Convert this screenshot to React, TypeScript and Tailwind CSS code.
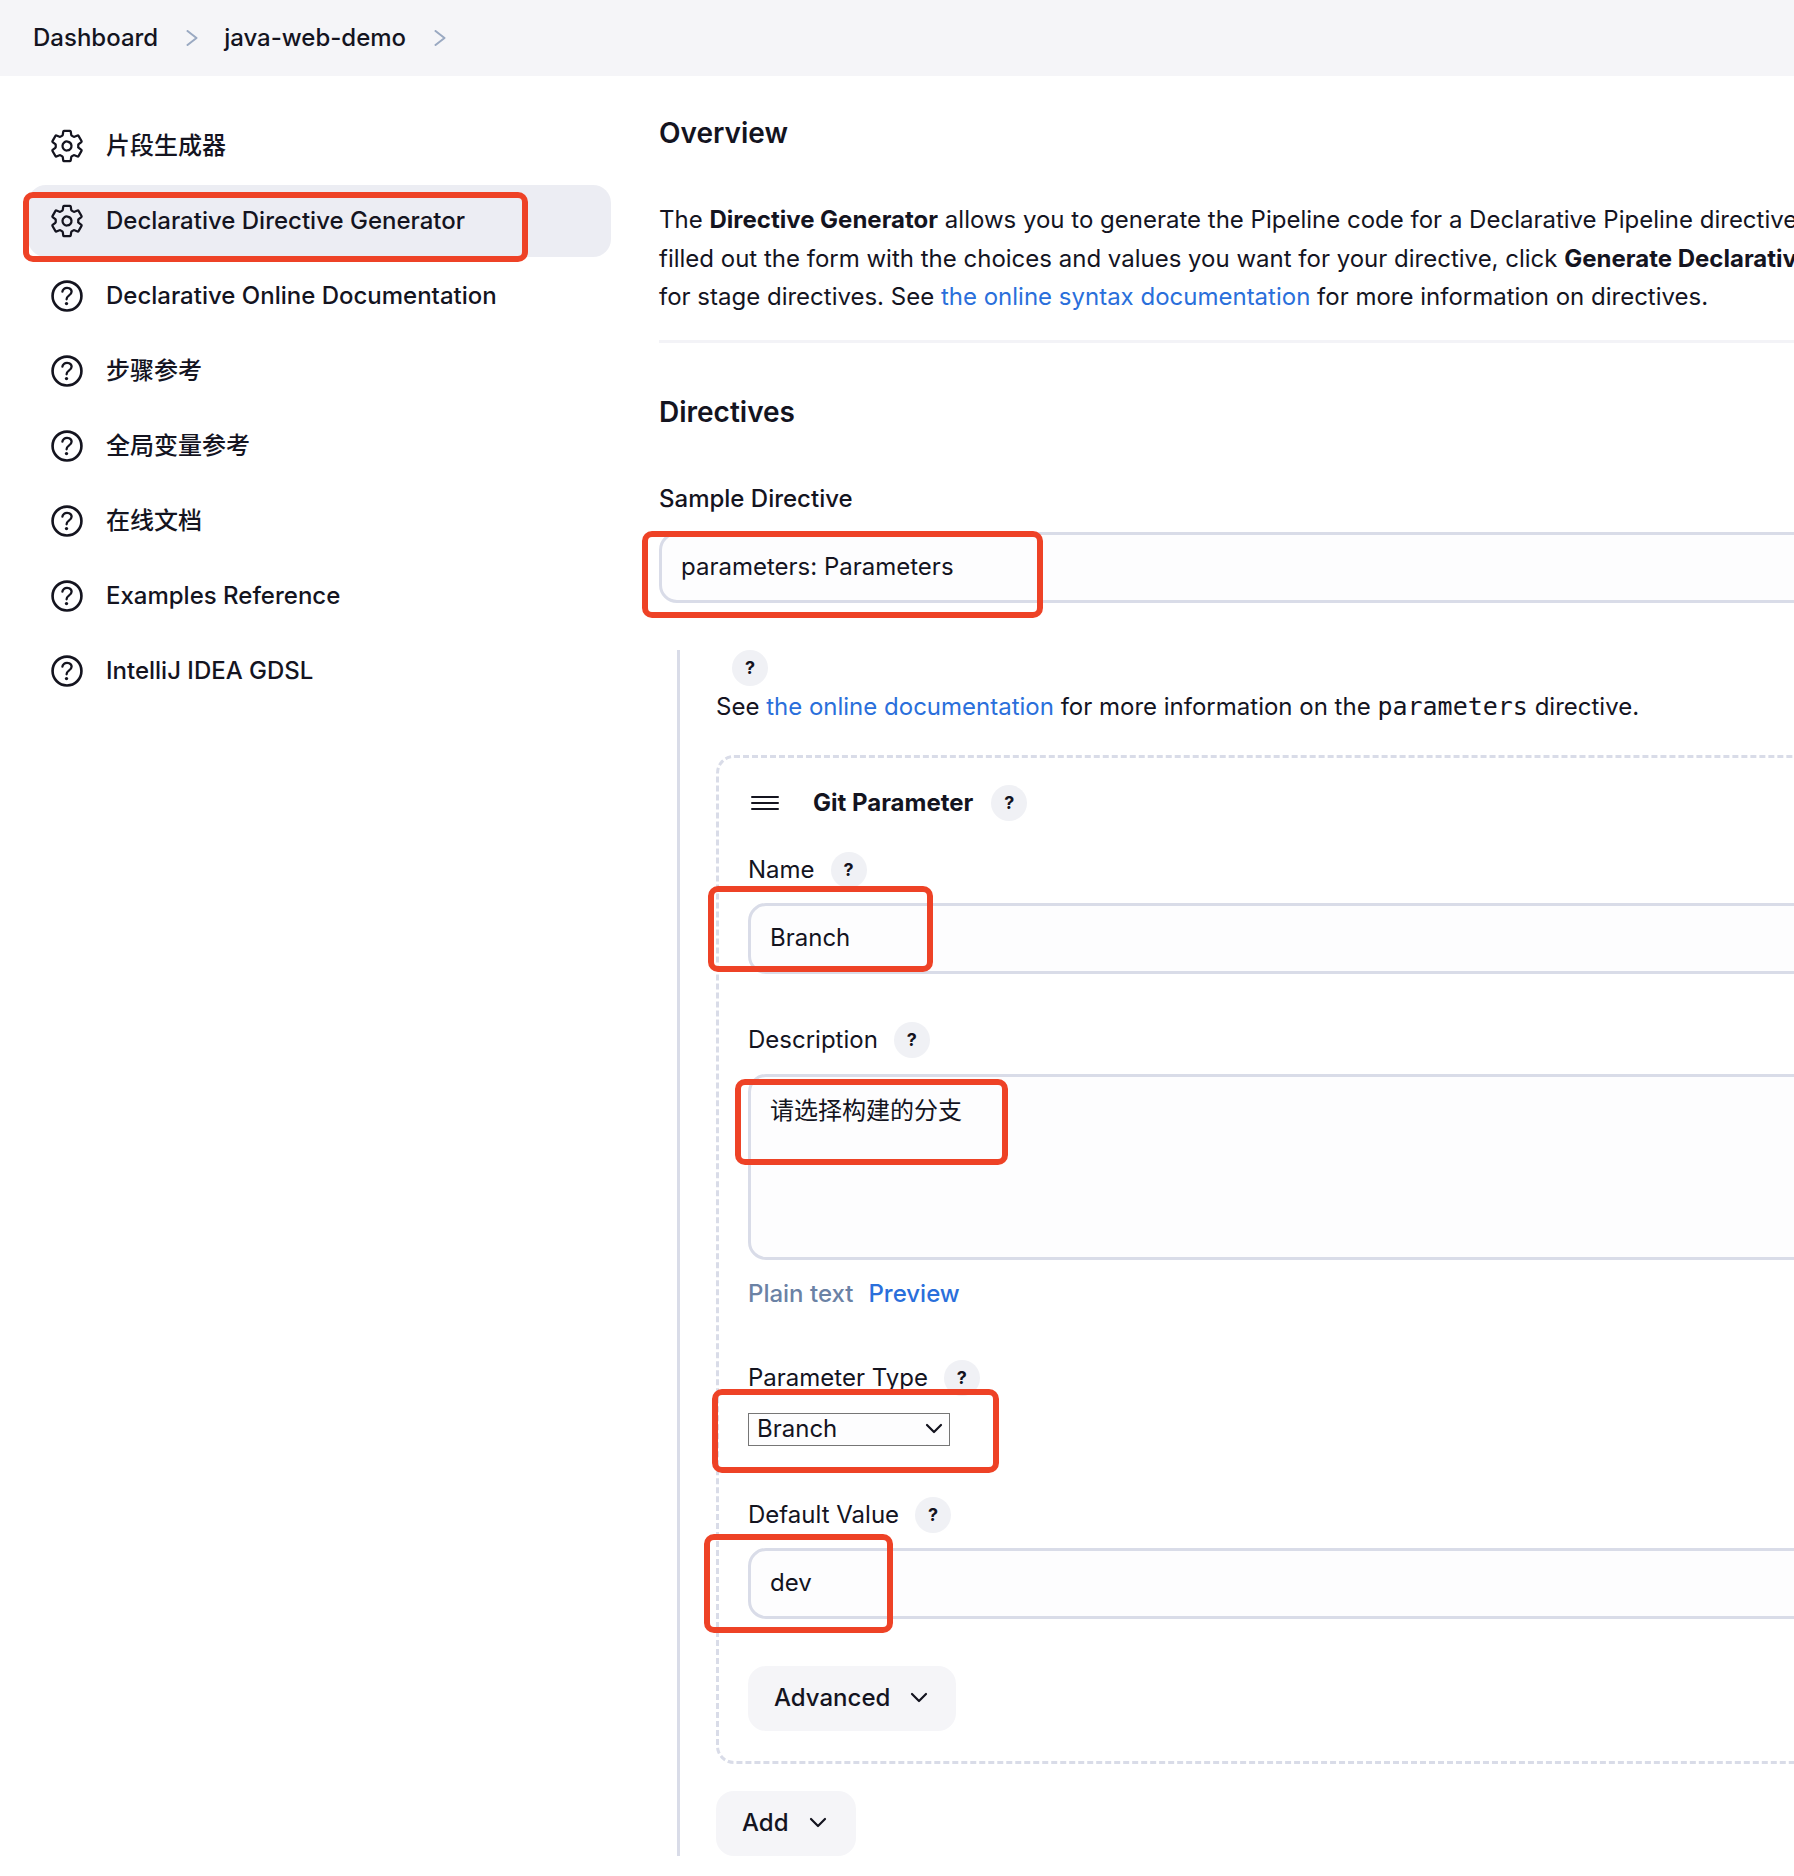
import React from 'react';
import {IoHelpCircleOutline, IoSettingsOutline} from 'react-icons/io5';

const navItems = [
  {label: '片段生成器', icon: 'gear'},
  {label: 'Declarative Directive Generator', icon: 'gear', active: true},
  {label: 'Declarative Online Documentation', icon: 'help'},
  {label: '步骤参考', icon: 'help'},
  {label: '全局变量参考', icon: 'help'},
  {label: '在线文档', icon: 'help'},
  {label: 'Examples Reference', icon: 'help'},
  {label: 'IntelliJ IDEA GDSL', icon: 'help'},
];

const redBoxes = [
  'left-[23px] top-[192px] w-[505px] h-[70px]',
  'left-[642px] top-[531px] w-[401px] h-[87px]',
  'left-[708px] top-[886px] w-[225px] h-[86px]',
  'left-[735px] top-[1079px] w-[273px] h-[86px]',
  'left-[712px] top-[1389px] w-[287px] h-[84px]',
  'left-[704px] top-[1534px] w-[189px] h-[99px]',
];

const Help = () => (
  <span className="flex h-9 w-9 shrink-0 items-center justify-center rounded-full bg-[#f0f1f5] text-[18px] font-bold text-[#14141f]">
    ?
  </span>
);

const Chevron = () => (
  <svg width="18" height="12" viewBox="0 0 18 12" fill="none" className="shrink-0">
    <path d="M2 2l7 7 7-7" stroke="#14141f" strokeWidth="2.2" strokeLinecap="round" strokeLinejoin="round" />
  </svg>
);

const Crumb = () => (
  <svg width="12" height="16" viewBox="0 0 12 16" fill="none" className="shrink-0">
    <path d="M1.5 1l9 7-9 7" stroke="#9aa9c2" strokeWidth="2" strokeLinecap="round" strokeLinejoin="round" />
  </svg>
);

const TextField = ({value}: {value: string}) => (
  <div className="flex h-[71px] items-center rounded-[18px] border-[3px] border-[#d9dce8] bg-[#fdfdfe] pl-[19px]">
    {value}
  </div>
);

const FieldLabel = ({label, gap}: {label: string; gap: string}) => (
  <div className={`flex h-9 items-center ${gap}`}>
    <span>{label}</span>
    <Help />
  </div>
);

const App = () => {
  return (
    <div className="relative h-[1876px] w-[1794px] overflow-hidden bg-white font-['Inter','Noto_Sans_CJK_SC',sans-serif] text-[24px] text-[#14141f]">
      <header className="flex h-[76px] items-center bg-[#f5f5f8] pl-[33px] font-medium">
        <span>Dashboard</span>
        <span className="ml-[28px]"><Crumb /></span>
        <span className="ml-[26px]">java-web-demo</span>
        <span className="ml-[28px]"><Crumb /></span>
      </header>

      <div className="flex">
        <aside className="w-[659px] shrink-0 pl-[28px] pt-[34px]">
          <nav className="flex w-[583px] flex-col gap-[3px]">
            {navItems.map((item) => (
              <div
                key={item.label}
                className={`flex h-[72px] items-center gap-[21px] rounded-[18px] pl-[21px] ${item.active ? 'bg-[#ecedf3]' : ''}`}
              >
                {item.icon === 'gear' ? (
                  <IoSettingsOutline className="h-9 w-9 shrink-0" />
                ) : (
                  <IoHelpCircleOutline className="h-[42px] w-[42px] -mx-[3px] shrink-0" />
                )}
                <span className="font-medium">{item.label}</span>
              </div>
            ))}
          </nav>
        </aside>

        <main className="w-[1500px] shrink-0 whitespace-nowrap pt-[38px]">
          <h2 className="text-[28px] leading-[38px] font-semibold">Overview</h2>
          <p className="mt-[49px] leading-[38.5px]">
            The <b>Directive Generator</b> allows you to generate the Pipeline code for a Declarative Pipeline directive. When you have
            <br />
            filled out the form with the choices and values you want for your directive, click <b>Generate Declarative Directive</b> and the
            <br />
            for stage directives. See <span className="text-[#2a6fdb]">the online syntax documentation</span> for more information on directives.
          </p>
          <div className="mt-[23px] h-[3px] bg-[#f3f3f7]" />
          <h2 className="mt-[50px] text-[28px] leading-[38px] font-semibold">Directives</h2>
          <div className="mt-[50px] h-9 leading-9 font-medium">Sample Directive</div>
          <div className="mt-[15px]">
            <TextField value="parameters: Parameters" />
          </div>

          <section className="ml-[18px] mt-[47px] border-l-[3px] border-[#d9dce8] pl-[36px]">
            <div className="ml-[16px]"><Help /></div>
            <p className="mt-[2px] leading-[38px]">
              See <span className="text-[#2a6fdb]">the online documentation</span> for more information on the{' '}
              <code className="font-['DejaVu_Sans_Mono',monospace] text-[25px]">parameters</code> directive.
            </p>

            <div className="mt-[29px] rounded-[18px] border-[3px] border-dashed border-[#d9dce8] pb-[30px] pl-[29px] pt-[27px]">
              <div className="flex h-9 items-center">
                <svg width="28" height="16" viewBox="0 0 28 16" className="ml-[3px] shrink-0">
                  <path d="M1 2h26M1 8h26M1 14h26" stroke="#14141f" strokeWidth="2" strokeLinecap="round" />
                </svg>
                <span className="ml-[34px] font-bold">Git Parameter</span>
                <span className="ml-[18px]"><Help /></span>
              </div>

              <div className="mt-[31px]"><FieldLabel label="Name" gap="gap-[16px]" /></div>
              <div className="mt-[15px]"><TextField value="Branch" /></div>

              <div className="mt-[48px]"><FieldLabel label="Description" gap="gap-[16px]" /></div>
              <div className="mt-[16px] h-[186px] rounded-[18px] border-[3px] border-[#d9dce8] bg-[#fdfdfe] pl-[19px] pt-[16px] leading-[36px]">
                请选择构建的分支
              </div>
              <div className="mt-[16px] flex h-9 items-center gap-[15px] font-medium">
                <span className="text-[#6b82a5]">Plain text</span>
                <span className="text-[#2a6fdb]">Preview</span>
              </div>

              <div className="mt-[48px]"><FieldLabel label="Parameter Type" gap="gap-[16px]" /></div>
              <div className="mt-[17px] flex h-[33px] w-[202px] items-center justify-between border border-[#767676] bg-[#fdfdfe] pl-[8px] pr-[6px]">
                <span>Branch</span>
                <Chevron />
              </div>

              <div className="mt-[51px]"><FieldLabel label="Default Value" gap="gap-[16px]" /></div>
              <div className="mt-[15px]"><TextField value="dev" /></div>

              <button className="mt-[47px] flex h-[65px] w-[208px] items-center gap-[20px] rounded-[18px] bg-[#f5f5f8] pl-[26px] font-medium">
                Advanced
                <Chevron />
              </button>
            </div>

            <button className="mt-[27px] flex h-[65px] w-[140px] items-center gap-[20px] rounded-[18px] bg-[#f5f5f8] pl-[26px] font-medium">
              Add
              <Chevron />
            </button>
          </section>
        </main>
      </div>

      {redBoxes.map((box) => (
        <div key={box} className={`pointer-events-none absolute rounded-[10px] border-[6px] border-[#ee4226] ${box}`} />
      ))}
    </div>
  );
};

export default App;
